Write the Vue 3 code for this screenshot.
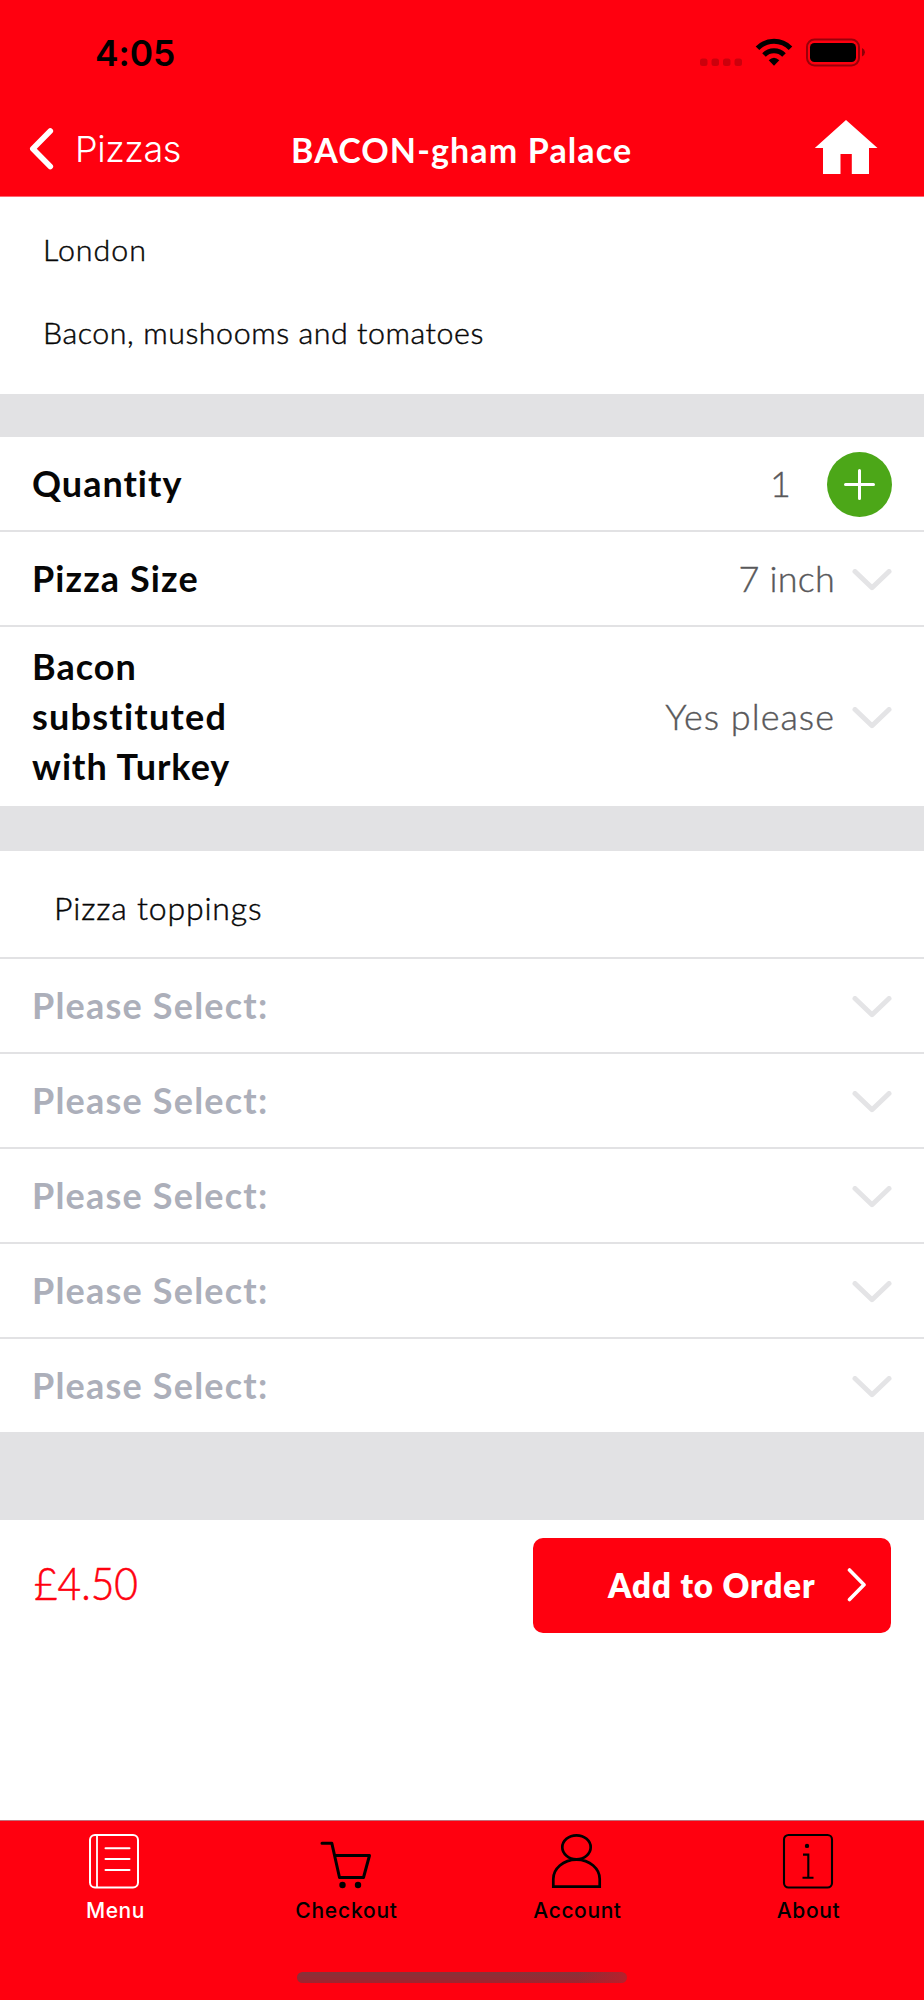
<script setup>
const toppings = [1, 2, 3, 4, 5]
</script>

<template>
  <div class="screen">
    <header class="top">
      <div class="status">
        <span class="time">4:05</span>
        <svg class="status-icons" width="170" height="30" viewBox="0 0 170 30">
          <g fill="#000" fill-opacity=".2">
            <rect x="2" y="20.500" width="7.500" height="7.500" rx="2.500" />
            <rect x="13.500" y="20.500" width="7.500" height="7.500" rx="2.500" />
            <rect x="25" y="20.500" width="7.500" height="7.500" rx="2.500" />
            <rect x="36.500" y="20.500" width="7.500" height="7.500" rx="2.500" />
          </g>
          <g fill="none" stroke="#000" stroke-width="5">
            <path d="M59.500 10.200A23 23 0 0 1 92.500 10.200" />
            <path d="M66 17A14 14 0 0 1 86 17" />
          </g>
          <path d="M70.700 22.300Q76 17.300 81.300 22.300L76 27.700Z" />
          <rect x="109" y="1.500" width="52" height="26" rx="7.500" fill="none" stroke="#000" stroke-opacity=".4" stroke-width="2" />
          <rect x="112" y="5" width="46" height="19" rx="4.500" />
          <path d="M164 10Q167 11.500 167 14.300Q167 17 164 18.500Z" fill-opacity=".45" />
        </svg>
      </div>
      <div class="nav">
        <div class="back">
          <svg width="26" height="44" viewBox="0 0 26 44">
            <path d="M22.300 4L4.800 21.700L22.300 39.500" fill="none" stroke="#fff" stroke-width="5.600" stroke-linecap="round" stroke-linejoin="round" />
          </svg>
          <span>Pizzas</span>
        </div>
        <h1>BACON-gham Palace</h1>
        <svg class="home" width="64" height="56" viewBox="0 0 64 56">
          <path d="M32 1L63.500 29H55V55H37.800V35H26.500V55H9V29H.8Z" fill="#fff" />
        </svg>
      </div>
    </header>

    <section class="intro">
      <p>London</p>
      <p>Bacon, mushooms and tomatoes</p>
    </section>

    <section class="group">
      <div class="row">
        <span class="label quantity">Quantity</span>
        <span class="value count">1</span>
        <svg class="plus" width="65" height="65" viewBox="0 0 65 65">
          <circle cx="32.500" cy="32.500" r="32.500" fill="#4ca718" />
          <path d="M18.500 32.500H46.500M32.500 18.500V46.500" stroke="#fff" stroke-width="3" stroke-linecap="round" />
        </svg>
      </div>
      <div class="row">
        <span class="label size">Pizza Size</span>
        <span class="value inch">7 inch</span>
        <svg class="chev" width="40" height="22" viewBox="0 0 40 22"><path d="M3 2.500L20 18.700L37 2.500" /></svg>
      </div>
      <div class="row tall">
        <span class="label"><span class="line">Bacon</span> <span class="line wide">substituted</span> <span class="line">with Turkey</span></span>
        <span class="value yes">Yes please</span>
        <svg class="chev" width="40" height="22" viewBox="0 0 40 22"><path d="M3 2.500L20 18.700L37 2.500" /></svg>
      </div>
    </section>

    <section class="toppings">
      <h2>Pizza toppings</h2>
      <div v-for="n in toppings" :key="n" class="row">
        <span class="label muted">Please Select:</span>
        <svg class="chev" width="40" height="22" viewBox="0 0 40 22"><path d="M3 2.500L20 18.700L37 2.500" /></svg>
      </div>
    </section>

    <section class="order">
      <span class="price">£4.50</span>
      <button class="add">
        <span>Add to Order</span>
        <svg width="20" height="34" viewBox="0 0 20 34"><path d="M2.500 2L17 16.800L2.500 31.500" fill="none" stroke="#fff" stroke-width="3.600" stroke-linecap="round" stroke-linejoin="round" /></svg>
      </button>
    </section>

    <footer class="tabs">
      <div class="tab active">
        <svg width="54" height="56" viewBox="0 0 54 56" fill="none" stroke="#fff" stroke-width="2">
          <rect x="3" y="2" width="48" height="52.500" rx="5" />
          <path d="M10 2V54" stroke-width="1.800" />
          <path d="M18.500 15.200H42.500M18.500 26H42.500M18.500 37H42.500" stroke-linecap="round" />
        </svg>
        <span class="menu">Menu</span>
      </div>
      <div class="tab">
        <svg width="54" height="56" viewBox="0 0 54 56" fill="none" stroke="#000" stroke-width="3">
          <path d="M4 10.200H13.800L21.500 44.500H45.500L51.500 22.500H16.500" stroke-linecap="round" stroke-linejoin="round" />
          <circle cx="24.500" cy="52" r="3.200" fill="#000" stroke="none" />
          <circle cx="40" cy="52" r="3.200" fill="#000" stroke="none" />
        </svg>
        <span class="checkout">Checkout</span>
      </div>
      <div class="tab">
        <svg width="54" height="56" viewBox="0 0 54 56" fill="none" stroke="#000" stroke-width="2.700">
          <ellipse cx="27.500" cy="14.300" rx="14.200" ry="12" />
          <path d="M4.300 53.700V46C4.300 36 14 26.700 27.500 26.700S50.700 36 50.700 46V53.700Z" />
        </svg>
        <span>Account</span>
      </div>
      <div class="tab">
        <svg width="54" height="56" viewBox="0 0 54 56" fill="none" stroke="#000" stroke-width="2.100">
          <rect x="4" y="2" width="48" height="52.500" rx="4.500" />
          <circle cx="27" cy="12.900" r="2.200" fill="#000" stroke="none" />
          <path d="M23 21.600H28.300V44.500M22.500 44.800H33.500" />
        </svg>
        <span>About</span>
      </div>
      <i class="indicator"></i>
    </footer>
  </div>
</template>

<style>
body { background: #fff; }
</style>

<style scoped>
.screen {
  width: 924px;
  height: 2000px;
  display: flex;
  flex-direction: column;
  overflow: hidden;
  font-family: Lato, "Liberation Sans", sans-serif;
  font-variant-ligatures: none;
  white-space: nowrap;
  color: #060606;
}
svg { display: block; flex: none; }
.top { height: 196px; background: #ff000f; border-bottom: 1px solid #ff6570; flex: none; }
.status { height: 106px; display: flex; justify-content: space-between; padding: 0 56px 0 95px; box-sizing: border-box; }
.time { font: 600 35.400px/42px Inter, sans-serif; letter-spacing: -.1px; color: #000; padding-top: 33px; }
.status-icons { margin-top: 38px; }
.nav { height: 90px; display: grid; grid-template-columns: 290px 1fr 111px; color: #fff; }
.back { display: flex; padding: 21px 0 0 28px; gap: 21px; }
.back span { font: 300 36px/44px Inter, sans-serif; letter-spacing: -.4px; }
h1 { margin: 0; padding: 23px 0 0 1px; font-size: 34px; line-height: 42px; font-weight: 700; letter-spacing: 1.130px; }
.home { margin-top: 13px; margin-left: 1px; }

.intro { height: 197px; box-sizing: border-box; padding: 34px 43px; flex: none; }
.intro p, h2 { margin: 0; font-weight: 300; -webkit-text-stroke: .45px #060606; }
.intro p { font-size: 30.400px; line-height: 36px; height: 83px; letter-spacing: .550px; }
.intro p:first-child { letter-spacing: 1px; }

.group { border-top: 43px solid #e2e2e4; border-bottom: 45px solid #e2e2e4; flex: none; }
.row { height: 93px; padding: 0 32px 0 32px; display: flex; align-items: center; }
.row + .row { border-top: 2px solid #e2e2e4; }
.row.tall { height: 179px; }
.label { font-size: 36px; line-height: 50px; font-weight: 700; letter-spacing: 1.100px; padding-bottom: 2px; margin-right: auto; }
.quantity { letter-spacing: 1px; }
.line { display: block; letter-spacing: 1px; }
.wide { letter-spacing: 1.230px; }
.value { font-size: 36px; line-height: 50px; font-weight: 300; color: #58585a; -webkit-text-stroke: .4px #58585a; padding-bottom: 2px; }
.count { margin-right: 36px; }
.inch { letter-spacing: .2px; margin-right: 17px; }
.yes { letter-spacing: 1.020px; margin-right: 17px; }
.plus { margin-top: 2px; }
.chev { margin-top: 2px; }
.chev path { fill: none; stroke: #e4e4e6; stroke-width: 5; stroke-linecap: round; stroke-linejoin: round; }
.muted { color: #acafba; letter-spacing: 1.200px; }

.toppings { border-bottom: 88px solid #e2e2e4; flex: none; }
h2 { height: 106px; box-sizing: border-box; padding: 38px 54px 0; font-size: 32px; line-height: 38px; letter-spacing: .830px; }
h2 + .row { border-top: 2px solid #e2e2e4; }

.order { height: 300px; box-sizing: border-box; display: flex; justify-content: space-between; align-items: flex-start; padding: 17.500px 33px 0 34px; flex: none; }
.price { font-size: 45px; line-height: 54px; font-weight: 300; color: #ff000f; -webkit-text-stroke: .6px #ff000f; padding-top: 18.500px; transform: scaleX(.905); transform-origin: left; }
.add { width: 358px; height: 95px; border: 0; border-radius: 10px; background: #ff000f; color: #fff; display: flex; align-items: center; padding: 0 24px 0 75px; justify-content: space-between; font: 800 33px/40px Lato, sans-serif; letter-spacing: .940px; font-variant-ligatures: none; }
.add span { padding-bottom: 1px; }

.tabs { position: relative; flex: 1; background: #ff000f; border-top: 1px solid #c0707a; display: grid; grid-template-columns: repeat(4, 1fr); color: #000; }
.tab { display: flex; flex-direction: column; align-items: center; padding-top: 12px; gap: 10px; font: 450 21px/24px Inter, sans-serif; letter-spacing: .6px; }
.tab svg { margin-right: 3px; }
.active { color: #fff; }
.menu { letter-spacing: .5px; }
.checkout { letter-spacing: .8px; }
.indicator { position: absolute; left: 297px; top: 151px; width: 330px; height: 11px; border-radius: 6px; background: linear-gradient(100deg, transparent 85%, #b8202c), linear-gradient(#87323a, #a0242f); }
</style>
